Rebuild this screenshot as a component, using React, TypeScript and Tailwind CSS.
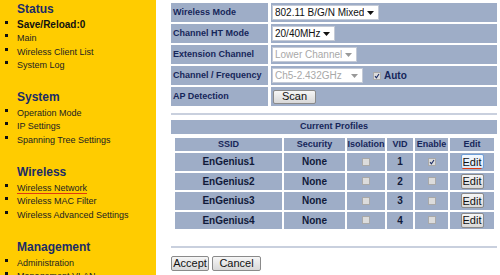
import React from "react";

const navy = "text-[#1b2c66]";

function Bullet() {
  return <span className="absolute left-[5px] top-[5px] w-[3px] h-[3px] bg-[#111]" />;
}

function Item({ children, bold, active }: { children: React.ReactNode; bold?: boolean; active?: boolean }) {
  return (
    <div className="relative h-[13.3px] leading-[13.3px] pl-[17px]">
      <Bullet />
      <span
        className={
          (bold ? "font-bold text-[10px] text-[#111]" : "text-[9px] text-[#222]") +
          (active ? " underline decoration-[#e03a10] decoration-[1px] underline-offset-[2px]" : "")
        }
      >
        {children}
      </span>
    </div>
  );
}

function Heading({ children, first }: { children: React.ReactNode; first?: boolean }) {
  return (
    <div className={(first ? "mt-[2px]" : "mt-[21px]") + " h-[14px] leading-[14px] pl-[17px] text-[12px] font-bold " + navy}>
      {children}
    </div>
  );
}

function Arrow({ color = "#111" }: { color?: string }) {
  return (
    <svg width="7" height="4" viewBox="0 0 7 4" className="shrink-0">
      <path d="M0 0 L7 0 L3.5 4 Z" fill={color} />
    </svg>
  );
}

function Select({ text, width, disabled }: { text: string; width: number; disabled?: boolean }) {
  return (
    <div
      className={
        "h-[15px] bg-white border border-[#c4cad6] flex items-center justify-between pl-[2px] pr-[4px] text-[10px] " +
        (disabled ? "text-[#a8a8a8]" : "text-[#111]")
      }
      style={{ width }}
    >
      <span className="whitespace-nowrap overflow-hidden">{text}</span>
      <Arrow color={disabled ? "#999" : "#111"} />
    </div>
  );
}

function Check({ checked }: { checked?: boolean }) {
  return (
    <div className="w-[8px] h-[8px] bg-[#dcdcdc] border border-[#a9a9a9] flex items-center justify-center">
      {checked && (
        <svg width="6" height="6" viewBox="0 0 6 6">
          <path d="M1 3.2 L2.4 4.8 L5 1" stroke="#1b2c66" strokeWidth="1.1" fill="none" />
        </svg>
      )}
    </div>
  );
}

function Btn({ children, className = "" }: { children: React.ReactNode; className?: string }) {
  return (
    <div
      className={
        "h-[14px] flex items-center justify-center text-[11px] text-[#111] border border-[#8a8a8a] rounded-[2px] bg-gradient-to-b from-[#f6f6f6] to-[#d8d8d8] " +
        className
      }
    >
      {children}
    </div>
  );
}

const labelCls = "h-[19px] bg-[#9eadc7] flex items-center pl-[2px] text-[9px] font-bold text-[#16265a] whitespace-nowrap";
const valueCls = "h-[19px] bg-[#9eadc7] flex items-center pl-[1px]";

export default function App() {
  const profiles = [
    { ssid: "EnGenius1", vid: "1", enable: true, focus: true },
    { ssid: "EnGenius2", vid: "2", enable: false },
    { ssid: "EnGenius3", vid: "3", enable: false },
    { ssid: "EnGenius4", vid: "4", enable: false },
  ];
  return (
    <div
      className="w-[500px] h-[275px] overflow-hidden flex bg-white"
      style={{ fontFamily: '"Liberation Sans", Arial, sans-serif' }}
    >
      <div className="w-[156px] h-full bg-[#ffcc00] shrink-0">
        <Heading first>Status</Heading>
        <Item bold>Save/Reload:0</Item>
        <Item>Main</Item>
        <Item>Wireless Client List</Item>
        <Item>System Log</Item>
        <Heading>System</Heading>
        <Item>Operation Mode</Item>
        <Item>IP Settings</Item>
        <Item>Spanning Tree Settings</Item>
        <Heading>Wireless</Heading>
        <Item active>Wireless Network</Item>
        <Item>Wireless MAC Filter</Item>
        <Item>Wireless Advanced Settings</Item>
        <Heading>Management</Heading>
        <Item>Administration</Item>
        <Item>Management VLAN</Item>
      </div>

      <div className="ml-[15px] w-[326px] flex flex-col">
        <div className="mt-[3px] grid grid-cols-[97px_1fr] gap-x-[3px] gap-y-[2px]">
          <div className={labelCls}>Wireless Mode</div>
          <div className={valueCls}>
            <Select text="802.11 B/G/N Mixed" width={107} />
          </div>
          <div className={labelCls}>Channel HT Mode</div>
          <div className={valueCls}>
            <Select text="20/40MHz" width={63} />
          </div>
          <div className={labelCls}>Extension Channel</div>
          <div className={valueCls}>
            <Select text="Lower Channel" width={85} disabled />
          </div>
          <div className={labelCls}>Channel / Frequency</div>
          <div className={valueCls}>
            <Select text="Ch5-2.432GHz" width={91} disabled />
            <div className="ml-[10px]">
              <Check checked />
            </div>
            <span className="ml-[3px] text-[10px] font-bold text-[#16265a]">Auto</span>
          </div>
          <div className={labelCls}>AP Detection</div>
          <div className={valueCls}>
            <Btn className="w-[43px] ml-[1px]">Scan</Btn>
          </div>
        </div>

        <div className="mt-[7px] h-[2px] bg-[#c9d0de]" />

        <div className="mt-[5px] h-[14px] bg-[#9eadc7] flex items-center justify-center text-[9px] font-bold text-[#16265a]">
          Current Profiles
        </div>

        <div className="mt-[4px] ml-[4px] grid grid-cols-[107px_61px_38px_26px_33px_44px] gap-[2px] text-[#16265a]">
          {["SSID", "Security", "Isolation", "VID", "Enable", "Edit"].map((h) => (
            <div key={h} className="h-[13px] bg-[#9eadc7] flex items-center justify-center text-[9px] font-bold">
              {h}
            </div>
          ))}
          {profiles.map((p) => (
            <React.Fragment key={p.ssid}>
              <div className="h-[17.5px] bg-[#9eadc7] flex items-center justify-center text-[10px] font-bold text-[#111a3a]">
                {p.ssid}
              </div>
              <div className="h-[17.5px] bg-[#9eadc7] flex items-center justify-center text-[10px] font-bold text-[#111a3a]">
                None
              </div>
              <div className="h-[17.5px] bg-[#9eadc7] flex items-center justify-center">
                <Check />
              </div>
              <div className="h-[17.5px] bg-[#9eadc7] flex items-center justify-center text-[10px] font-bold text-[#111a3a]">
                {p.vid}
              </div>
              <div className="h-[17.5px] bg-[#9eadc7] flex items-center justify-center">
                <Check checked={p.enable} />
              </div>
              <div className="h-[17.5px] bg-[#9eadc7] flex items-center justify-center">
                {p.focus ? (
                  <div className="w-[23px] h-[15px] flex items-center justify-center text-[11px] text-[#111] border border-[#6f9fd8] rounded-[2px] bg-gradient-to-b from-[#f4f9ff] to-[#dde9f6]">
                    <span className="underline decoration-[#e03a10] underline-offset-[2px]">Edit</span>
                  </div>
                ) : (
                  <Btn className="w-[23px] h-[15px]">Edit</Btn>
                )}
              </div>
            </React.Fragment>
          ))}
        </div>

        <div className="mt-[17px] h-[2px] bg-[#c9d0de]" />

        <div className="mt-[8px] flex gap-[3px]">
          <Btn className="w-[38px] h-[15px]">Accept</Btn>
          <Btn className="w-[49px] h-[15px]">Cancel</Btn>
        </div>
      </div>
    </div>
  );
}
